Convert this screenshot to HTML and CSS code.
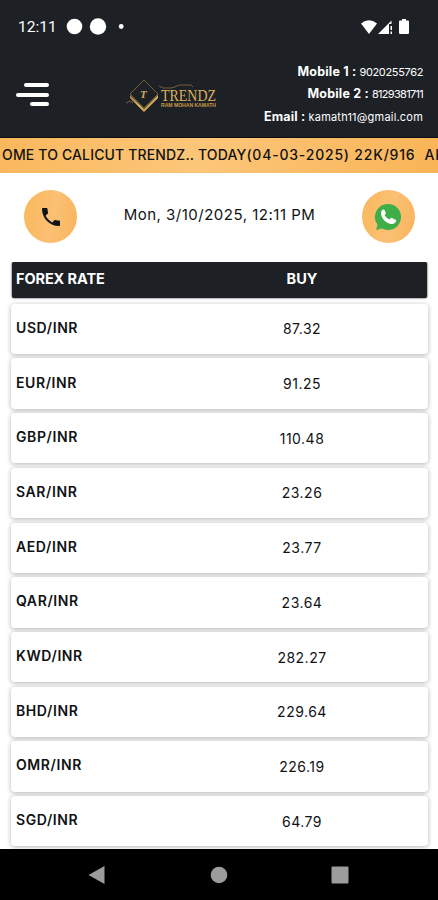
FILE: index.html
```html
<!DOCTYPE html>
<html lang="en">
<head>
  <meta charset="UTF-8">
  <meta name="viewport" content="width=device-width, initial-scale=1.0">
  <title>Calicut Trendz</title>
  <link rel="stylesheet" href="styles.css">
</head>
<body>

  <!-- Status bar -->
  <div class="status-bar">
    <span class="clock">12:11</span>
    <svg class="notifications" width="64" height="20" viewBox="0 0 64 20" fill="#fff">
      <circle cx="10.5" cy="9.500" r="7.8"/>
      <circle cx="34" cy="9.500" r="8.2"/>
      <circle cx="57.2" cy="9.500" r="2.4"/>
    </svg>
    <svg class="signals" width="52" height="18" viewBox="0 0 52 18" fill="#fff">
      <path d="M1 5.5Q9 -1 17 5.5L9 16Z"/>
      <path d="M18 16L31.5 2.5V6H29V16Z"/>
      <path d="M30.5 8h1.5v4h-1.5zM30.5 13.5h1.5V16h-1.5z"/>
      <path d="M40 2.5h2V1h4v1.500h2q1 0 1 1V15q0 1-1 1h-8q-1 0-1-1V3.500q0-1 1-1z"/>
    </svg>
  </div>

  <!-- Header -->
  <header class="header">
    <button class="menu" aria-label="Menu">
      <span class="line top"></span>
      <span class="line"></span>
      <span class="line bottom"></span>
    </button>

    <svg class="logo" width="94" height="38" viewBox="0 0 94 38">
      <defs>
        <linearGradient id="gold" x1="0" y1="0" x2="1" y2="1">
          <stop offset="0" stop-color="#a57c3b"/>
          <stop offset=".5" stop-color="#e0b866"/>
          <stop offset="1" stop-color="#b58437"/>
        </linearGradient>
      </defs>
      <g fill="none" stroke="#8d7040" stroke-width=".8">
        <path d="M4 16L18 2L32 16L18 30Z"/>
        <path d="M0 25l4-2 3 2M33 8l4 2 8 0 4-1 4-2 12 0 2 2"/>
      </g>
      <path d="M4 17L18 31L32 17V20L18 34L4 20Z" fill="url(#gold)"/>
      <text class="logo-mark" x="14" y="20">T</text>
      <text class="logo-name" x="35" y="22.500" textLength="55" lengthAdjust="spacingAndGlyphs">TRENDZ</text>
      <text class="logo-sub" x="35" y="28.500" textLength="55" lengthAdjust="spacingAndGlyphs">RAM MOHAN KAMATH</text>
    </svg>

    <div class="details">
      <p><b>Mobile 1 :</b> <span class="phone1">9020255762</span></p>
      <p><b>Mobile 2 :</b> <span class="phone2">8129381711</span></p>
      <p><b>Email :</b> <span class="mail">kamath11@gmail.com</span></p>
    </div>
  </header>

  <!-- Scrolling news -->
  <div class="news">
    <span class="welcome">OME TO CALICUT TRENDZ.. TODAY</span><span class="today">(04-03-2025) 22K/916&nbsp; AKGSMA</span>
  </div>

  <!-- Contact buttons -->
  <div class="contact">
    <a class="round" href="#" aria-label="Call">
      <svg width="24" height="24" viewBox="0 0 24 24" fill="#101417">
        <path d="M6.6 10.800c1.450 2.830 3.760 5.140 6.600 6.590l2.200-2.200c.270-.270.670-.360 1.020-.240 1.120.370 2.330.570 3.570.570.550 0 1 .450 1 1V20c0 .550-.450 1-1 1C10.600 21 3 13.400 3 4c0-.550.450-1 1-1h3.500c.550 0 1 .450 1 1 0 1.250.200 2.450.570 3.570.110.350.030.740-.250 1.020z"/>
      </svg>
    </a>
    <span class="date">Mon, 3/10/2025, 12:11 PM</span>
    <a class="round" href="#" aria-label="WhatsApp">
      <svg width="28" height="28" viewBox="0 0 28 28">
        <path d="M14 1a13 13 0 1 1-6.200 24.400L2 27l1.500-5.300A13 13 0 0 1 14 1z" fill="#3fae49"/>
        <path d="M8.400 6.900c.7-.7 1.700-.6 2.100.2l1.200 2.500c.3.600.1 1-.3 1.500l-.8 1c1.100 2 2.600 3.500 4.700 4.400l1.300-1.300c.4-.4.900-.5 1.400-.2l3.500 1.800c.7.400.8 1 .5 1.700-.9 1.900-2.800 2.800-4.900 2.400-5.300-.9-9.300-4.900-10-9.900-.2-1.700.200-3.100 1.300-4.100z" fill="#fff"/>
      </svg>
    </a>
  </div>

  <!-- Rates -->
  <main class="rates">
    <div class="rates-head">
      <span class="forex">FOREX RATE</span>
      <span class="buy">BUY</span>
    </div>
    <div class="row"><span class="pair">USD/INR</span><span class="rate">87.32</span></div>
    <div class="row"><span class="pair">EUR/INR</span><span class="rate">91.25</span></div>
    <div class="row"><span class="pair">GBP/INR</span><span class="rate">110.48</span></div>
    <div class="row"><span class="pair">SAR/INR</span><span class="rate">23.26</span></div>
    <div class="row"><span class="pair">AED/INR</span><span class="rate">23.77</span></div>
    <div class="row"><span class="pair">QAR/INR</span><span class="rate">23.64</span></div>
    <div class="row"><span class="pair">KWD/INR</span><span class="rate">282.27</span></div>
    <div class="row"><span class="pair">BHD/INR</span><span class="rate">229.64</span></div>
    <div class="row"><span class="pair">OMR/INR</span><span class="rate">226.19</span></div>
    <div class="row"><span class="pair">SGD/INR</span><span class="rate">64.79</span></div>
  </main>

  <!-- Android navigation -->
  <nav class="nav-bar">
    <svg width="18" height="20" viewBox="0 0 18 20" fill="#9c9c9c"><path d="M0.500 10L16.500 1V19Z"/></svg>
    <svg width="18" height="18" viewBox="0 0 18 18" fill="#9c9c9c"><circle cx="9" cy="9" r="8.300"/></svg>
    <svg width="18" height="18" viewBox="0 0 18 18" fill="#9c9c9c"><rect x=".5" y=".5" width="17" height="17" rx="1"/></svg>
  </nav>

</body>
</html>
```
FILE: styles.css
```css
* {
  box-sizing: border-box;
}
body {
  margin: 0;
  height: 900px;
  overflow: hidden;
  display: flex;
  flex-direction: column;
  font-family: Inter, 'Open Sans', sans-serif;
  background: #fff;
  color: #101214;
}

/* status bar */
.status-bar {
  flex: none;
  height: 52px;
  padding: 2px 26px 0 18px;
  display: flex;
  align-items: center;
  background: #1d2126;
  color: #fff;
}
.clock {
  width: 46px;
  font-family: Roboto, sans-serif;
  font-size: 15.500px;
}
.signals {
  margin-left: auto;
}

/* header */
.header {
  flex: none;
  height: 86px;
  padding: 0 15px 0 16px;
  display: flex;
  align-items: flex-start;
  background: #1d2126;
  border-bottom: 1px solid #0b0d12;
  color: #fff;
}
.menu {
  width: 33px;
  margin-top: 31px;
  padding: 0;
  display: flex;
  flex-direction: column;
  align-items: flex-end;
  gap: 5.500px;
  background: none;
  border: none;
}
.line {
  width: 33px;
  height: 4px;
  border-radius: 2px;
  background: #fff;
}
.line.top {
  width: 25px;
}
.line.bottom {
  width: 19px;
}
.logo {
  margin: 26px 0 0 77px;
  overflow: visible;
}
.logo-mark {
  font: italic bold 11px 'Liberation Serif', serif;
  fill: #d3a95b;
}
.logo-name {
  font: 16px 'Liberation Serif', serif;
  fill: #d9b25f;
}
.logo-sub {
  font: bold 5px 'Liberation Sans', sans-serif;
  fill: #c99a48;
}
.details {
  margin-left: auto;
  padding-top: 9px;
  text-align: right;
  white-space: nowrap;
}
.details p {
  margin: 0;
  height: 22.300px;
  line-height: 22px;
  font-size: 11px;
}
.details b {
  font-size: 12.500px;
  font-weight: 700;
  letter-spacing: 0.2px;
}
.phone1 {
  letter-spacing: -0.35px;
}
.phone2 {
  letter-spacing: -0.7px;
}
.mail {
  letter-spacing: 0.2px;
}

/* news */
.news {
  flex: none;
  height: 35px;
  padding-left: 2px;
  overflow: hidden;
  white-space: nowrap;
  line-height: 33px;
  font-size: 14px;
  font-weight: 500;
  background: linear-gradient(100deg, #fab85d, #fcc679 45%, #f9b457);
}
.welcome {
  letter-spacing: 0.15px;
}
.today {
  letter-spacing: 0.8px;
}

/* contact */
.contact {
  flex: none;
  height: 89px;
  padding: 17px 23px 0 24px;
  display: flex;
  align-items: flex-start;
  justify-content: space-between;
}
.round {
  width: 53px;
  height: 53px;
  display: flex;
  align-items: center;
  justify-content: center;
  border-radius: 50%;
  background: linear-gradient(100deg, #fab85d, #fbc074 55%, #f9b45c);
}
.date {
  line-height: 50px;
  font-size: 15px;
  letter-spacing: 0.5px;
}

/* rates */
.rates {
  flex: 1;
  min-height: 0;
  padding: 0 10px 0 11px;
  overflow: hidden;
}
.rates-head,
.row {
  display: grid;
  grid-template-columns: 206px 160px;
  align-items: center;
}
.rates-head {
  height: 36px;
  margin: 0 1px 5.700px;
  padding: 0 0 3px 4px;
  border-radius: 2px;
  background: #1d2126;
  box-shadow: 0 0 2px #000;
  color: #fff;
  font-size: 14.500px;
  font-weight: 700;
}
.forex {
  letter-spacing: -0.1px;
}
.buy,
.rate {
  text-align: center;
}
.row {
  height: 50.300px;
  margin-bottom: 4.420px;
  padding: 0 0 3px 5px;
  border-radius: 4px;
  background: #fff;
  box-shadow: 0 1px 5px rgba(0, 0, 0, 0.3);
}
.pair {
  font-size: 14px;
  font-weight: 600;
  letter-spacing: 0.6px;
}
.rate {
  padding-top: 3px;
  font-size: 14px;
  letter-spacing: 0.5px;
}

/* android navigation */
.nav-bar {
  flex: none;
  height: 51px;
  padding: 0 89px 0 88px;
  display: flex;
  align-items: center;
  justify-content: space-between;
  background: #000;
}
```
